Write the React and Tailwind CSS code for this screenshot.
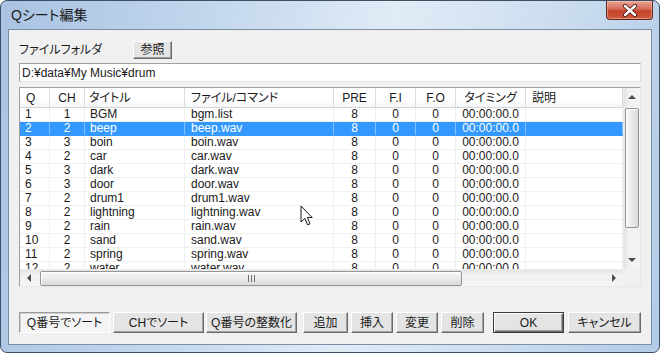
import React from "react";

const FONT = {
  fontFamily: '"Liberation Sans", "Noto Sans CJK JP", sans-serif',
};

const cols = [
  { w: "w-[30px]", h: "Q", ha: "justify-start pl-[6px]", da: "justify-start pl-[5px]" },
  { w: "w-[35px]", h: "CH", ha: "justify-center", da: "justify-center" },
  { w: "w-[100px]", h: "タイトル", ha: "justify-start pl-[4px]", da: "justify-start pl-[5px]" },
  { w: "w-[149px]", h: "ファイル/コマンド", ha: "justify-start pl-[6px]", da: "justify-start pl-[6px]" },
  { w: "w-[42px]", h: "PRE", ha: "justify-center", da: "justify-center" },
  { w: "w-[40px]", h: "F.I", ha: "justify-center", da: "justify-center" },
  { w: "w-[40px]", h: "F.O", ha: "justify-center", da: "justify-center" },
  { w: "w-[70px]", h: "タイミング", ha: "justify-center", da: "justify-center" },
  { w: "w-[97px]", h: "説明", ha: "justify-start pl-[6px]", da: "justify-start pl-[6px]" },
];

const rows = [
  ["1", "1", "BGM", "bgm.list"],
  ["2", "2", "beep", "beep.wav"],
  ["3", "3", "boin", "boin.wav"],
  ["4", "2", "car", "car.wav"],
  ["5", "3", "dark", "dark.wav"],
  ["6", "3", "door", "door.wav"],
  ["7", "2", "drum1", "drum1.wav"],
  ["8", "2", "lightning", "lightning.wav"],
  ["9", "2", "rain", "rain.wav"],
  ["10", "2", "sand", "sand.wav"],
  ["11", "2", "spring", "spring.wav"],
  ["12", "2", "water", "water.wav"],
];

function Btn({ children, className = "", variant = "normal" }) {
  let v =
    "bg-[#e4e4e4] border border-t-[#ffffff] border-l-[#ffffff] border-r-[#6a6a6a] border-b-[#6a6a6a] shadow-[inset_-1px_-1px_0_#a0a0a0]";
  if (variant === "default")
    v =
      "bg-[#e4e4e4] border border-[#3a3a3a] shadow-[inset_1px_1px_0_#ffffff,inset_-1px_-1px_0_#6a6a6a,inset_-2px_-2px_0_#a0a0a0]";
  if (variant === "pressed")
    v =
      "bg-[#f4f4f4] border border-t-[#9a9a9a] border-l-[#9a9a9a] border-r-[#ffffff] border-b-[#ffffff] shadow-[inset_1px_1px_0_#d0d0d0]";
  return (
    <div
      className={`flex items-center justify-center h-[21px] text-[12px] text-[#1a1a1a] [font-feature-settings:'palt'] ${v} ${className}`}
    >
      {children}
    </div>
  );
}

function Tri({ dir, className = "" }) {
  const pts = {
    up: "0,5 4,1 8,5",
    down: "0,1 4,5 8,1",
    left: "5,0 1,4 5,8",
    right: "1,0 5,4 1,8",
  }[dir];
  const size = dir === "up" || dir === "down" ? { w: 8, h: 6 } : { w: 6, h: 8 };
  return (
    <svg width={size.w} height={size.h} viewBox={`0 0 ${size.w} ${size.h}`} className={className}>
      <polygon points={pts} fill="#4d4d4d" />
    </svg>
  );
}

export default function App() {
  return (
    <div
      style={FONT}
      className="relative w-[660px] h-[353px] overflow-hidden rounded-[7px] border border-[#3f4f63] bg-[linear-gradient(100deg,#a9c3e2_0%,#c3d7ed_30%,#e1ebf6_55%,#cfdff0_75%,#b2cbe7_100%)]"
    >
      {/* title bar */}
      <div className="flex justify-between h-[28px]">
        <div className="self-center pl-[10px] pt-[1px] text-[14px] text-[#1b1b1b] [font-feature-settings:'palt']">
          Qシート編集
        </div>
        <div className="self-start mr-[6px] w-[47px] h-[19px] rounded-b-[4px] border border-t-0 border-[#5e2a20] bg-[linear-gradient(180deg,#e9a597_0%,#d46a54_45%,#c4412a_55%,#cf5a3c_100%)] shadow-[inset_0_0_0_1px_rgba(255,210,200,0.45)] flex items-center justify-center">
          <svg width="16" height="13" viewBox="0 0 16 13">
            <path d="M3 2 L13 11 M13 2 L3 11" stroke="#4a1c14" strokeWidth="4.2" strokeLinecap="round" />
            <path d="M3 2 L13 11 M13 2 L3 11" stroke="#ffffff" strokeWidth="2.4" strokeLinecap="round" />
          </svg>
        </div>
      </div>

      {/* client area */}
      <div className="ml-[7px] w-[644px] h-[316px] border border-[#7d8fa6] bg-[#f0f0f0] pt-[10px] pl-[10px]">
        {/* folder row */}
        <div className="flex items-center h-[19px]">
          <div className="w-[114px] text-[12px] text-[#1a1a1a] [font-feature-settings:'palt']">ファイルフォルダ</div>
          <Btn className="w-[39px] !h-[18px]">参照</Btn>
        </div>

        {/* path input */}
        <div className="mt-[4px] w-[622px] h-[19px] bg-white border border-t-[#a0a0a0] border-l-[#a0a0a0] border-r-[#e3e3e3] border-b-[#e3e3e3] flex items-center pl-[2px] text-[12px] text-[#1a1a1a]">
          D:¥data¥My Music¥drum
        </div>

        {/* list view */}
        <div className="mt-[5px] w-[622px] h-[200px] border border-t-[#a0a0a0] border-l-[#a0a0a0] border-r-[#e8e8e8] border-b-[#e8e8e8] bg-white flex flex-col">
          <div className="flex h-[181px]">
            <div className="w-[603px] h-[181px] overflow-hidden">
              {/* header */}
              <div className="flex h-[20px] border-b border-[#d5d5d5] bg-[linear-gradient(180deg,#ffffff_0%,#ffffff_60%,#f5f6f7_100%)]">
                {cols.map((c, i) => (
                  <div
                    key={i}
                    className={`${c.w} shrink-0 flex items-center ${c.ha} border-r border-[#dcdcdc] text-[12px] text-[#1a1a1a] [font-feature-settings:'palt']`}
                  >
                    {c.h}
                  </div>
                ))}
              </div>
              {/* rows */}
              {rows.map((r, ri) => {
                const sel = ri === 1;
                const vals = [r[0], r[1], r[2], r[3], "8", "0", "0", "00:00:00.0", ""];
                return (
                  <div
                    key={ri}
                    className={`flex h-[14px] border-b ${sel ? "bg-[#3399ff] text-white border-[#3399ff]" : "text-[#1a1a1a] border-[#f0f0f0]"}`}
                  >
                    {cols.map((c, ci) => (
                      <div
                        key={ci}
                        className={`${c.w} shrink-0 flex items-center ${c.da} border-r ${sel ? "border-[#7fbfff]" : "border-[#f0f0f0]"} text-[12px] leading-[13px] whitespace-nowrap`}
                      >
                        {vals[ci]}
                      </div>
                    ))}
                  </div>
                );
              })}
            </div>
            {/* vertical scrollbar */}
            <div className="w-[17px] h-[181px] flex flex-col bg-[linear-gradient(90deg,#e3e3e3_0%,#f1f1f1_30%,#f4f4f4_100%)] border-l border-[#eaeaea]">
              <div className="h-[18px] flex items-center justify-center">
                <Tri dir="up" />
              </div>
              <div className="mt-[2px] mx-[1px] h-[120px] rounded-[2px] border border-[#959595] bg-[linear-gradient(90deg,#f6f6f6_0%,#ececec_45%,#d9d9d9_100%)] shadow-[inset_1px_1px_0_#ffffff]" />
              <div className="flex-1" />
              <div className="h-[18px] flex items-center justify-center">
                <Tri dir="down" />
              </div>
            </div>
          </div>
          {/* horizontal scrollbar row */}
          <div className="flex h-[17px]">
            <div className="w-[603px] h-[17px] flex items-center bg-[linear-gradient(180deg,#e3e3e3_0%,#f1f1f1_30%,#f4f4f4_100%)] border-t border-[#eaeaea]">
              <div className="w-[18px] h-full flex items-center justify-center">
                <Tri dir="left" />
              </div>
              <div className="ml-[2px] w-[422px] h-[15px] rounded-[2px] border border-[#959595] bg-[linear-gradient(180deg,#f6f6f6_0%,#ececec_45%,#d9d9d9_100%)] shadow-[inset_1px_1px_0_#ffffff] flex items-center justify-center">
                <div className="flex gap-[2px]">
                  <div className="w-[1px] h-[7px] bg-[#6f6f6f]" />
                  <div className="w-[1px] h-[7px] bg-[#6f6f6f]" />
                  <div className="w-[1px] h-[7px] bg-[#6f6f6f]" />
                </div>
              </div>
              <div className="flex-1" />
              <div className="w-[18px] h-full flex items-center justify-center">
                <Tri dir="right" />
              </div>
            </div>
            <div className="w-[17px] h-[17px] bg-[#f0f0f0]" />
          </div>
        </div>

        {/* bottom buttons */}
        <div className="mt-[25px] flex">
          <Btn variant="pressed" className="w-[91px]">Q番号でソート</Btn>
          <Btn className="ml-[3px] w-[91px]">CHでソート</Btn>
          <Btn className="ml-[2px] w-[91px]">Q番号の整数化</Btn>
          <Btn className="ml-[6px] w-[45px]">追加</Btn>
          <Btn className="ml-[3px] w-[42px]">挿入</Btn>
          <Btn className="ml-[3px] w-[42px]">変更</Btn>
          <Btn className="ml-[3px] w-[43px]">削除</Btn>
          <Btn variant="default" className="ml-[9px] w-[71px]">OK</Btn>
          <Btn className="ml-[4px] w-[73px]">キャンセル</Btn>
        </div>
      </div>

      {/* mouse cursor */}
      <svg
        className="absolute left-[299px] top-[204px]"
        width="14"
        height="22"
        viewBox="0 0 14 22"
      >
        <path
          d="M1 1 L1 17 L4.8 13.4 L7.6 19.8 L10 18.8 L7.3 12.5 L12.2 12.5 Z"
          fill="#ffffff"
          stroke="#1a1a1a"
          strokeWidth="1"
          strokeLinejoin="round"
        />
      </svg>
    </div>
  );
}
